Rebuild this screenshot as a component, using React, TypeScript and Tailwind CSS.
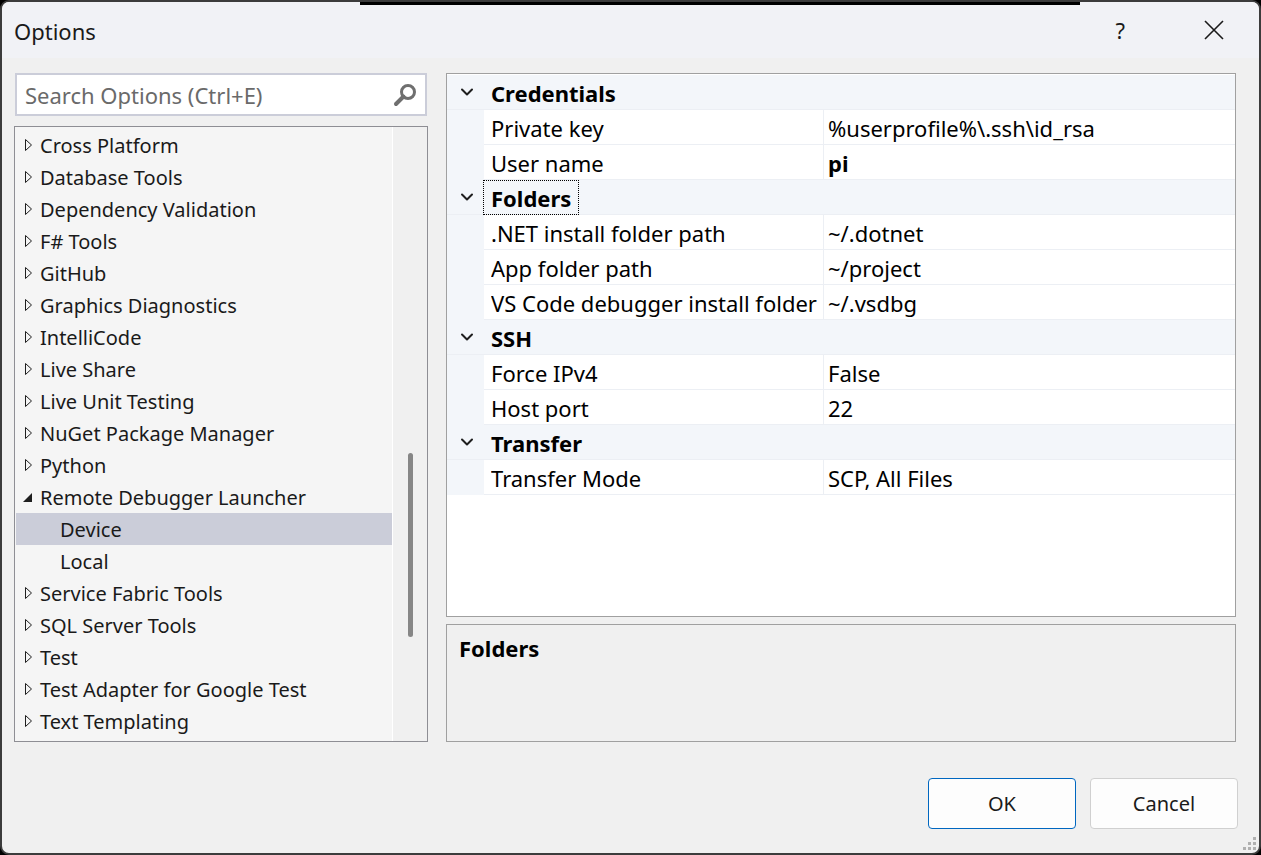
import React from 'react';

// Options dialog - Remote Debugger Launcher / Device page

const FONT = '"Noto Sans", "Open Sans", sans-serif';

type TreeItem = { label: string; level: 0 | 1; state?: 'closed' | 'open' | 'leaf'; selected?: boolean };

const treeItems: TreeItem[] = [
  { label: 'Cross Platform', level: 0, state: 'closed' },
  { label: 'Database Tools', level: 0, state: 'closed' },
  { label: 'Dependency Validation', level: 0, state: 'closed' },
  { label: 'F# Tools', level: 0, state: 'closed' },
  { label: 'GitHub', level: 0, state: 'closed' },
  { label: 'Graphics Diagnostics', level: 0, state: 'closed' },
  { label: 'IntelliCode', level: 0, state: 'closed' },
  { label: 'Live Share', level: 0, state: 'closed' },
  { label: 'Live Unit Testing', level: 0, state: 'closed' },
  { label: 'NuGet Package Manager', level: 0, state: 'closed' },
  { label: 'Python', level: 0, state: 'closed' },
  { label: 'Remote Debugger Launcher', level: 0, state: 'open' },
  { label: 'Device', level: 1, state: 'leaf', selected: true },
  { label: 'Local', level: 1, state: 'leaf' },
  { label: 'Service Fabric Tools', level: 0, state: 'closed' },
  { label: 'SQL Server Tools', level: 0, state: 'closed' },
  { label: 'Test', level: 0, state: 'closed' },
  { label: 'Test Adapter for Google Test', level: 0, state: 'closed' },
  { label: 'Text Templating', level: 0, state: 'closed' },
];

type Section = { title: string; focused?: boolean; props: { name: string; value: string; bold?: boolean }[] };

const sections: Section[] = [
  {
    title: 'Credentials',
    props: [
      { name: 'Private key', value: '%userprofile%\\.ssh\\id_rsa' },
      { name: 'User name', value: 'pi', bold: true },
    ],
  },
  {
    title: 'Folders',
    focused: true,
    props: [
      { name: '.NET install folder path', value: '~/.dotnet' },
      { name: 'App folder path', value: '~/project' },
      { name: 'VS Code debugger install folder path', value: '~/.vsdbg' },
    ],
  },
  {
    title: 'SSH',
    props: [
      { name: 'Force IPv4', value: 'False' },
      { name: 'Host port', value: '22' },
    ],
  },
  {
    title: 'Transfer',
    props: [{ name: 'Transfer Mode', value: 'SCP, All Files' }],
  },
];

function ClosedArrow() {
  return (
    <svg width="9" height="14" viewBox="0 0 9 14" className="shrink-0">
      <path d="M1.5 1.5 L7.5 7 L1.5 12.5 Z" fill="none" stroke="#1e1e1e" strokeWidth="1" strokeLinejoin="miter" />
    </svg>
  );
}

function OpenArrow() {
  return (
    <svg width="11" height="11" viewBox="0 0 11 11" className="shrink-0">
      <path d="M10 1 L10 10 L1 10 Z" fill="#1e1e1e" />
    </svg>
  );
}

function Chevron() {
  return (
    <svg width="14" height="10" viewBox="0 0 14 10">
      <path d="M2 2.5 L7 7.5 L12 2.5" fill="none" stroke="#1e1e1e" strokeWidth="2" strokeLinecap="round" strokeLinejoin="round" />
    </svg>
  );
}

export default function App() {
  return (
    <div className="w-[1261px] h-[855px] bg-black" style={{ fontFamily: FONT }}>
      <div className="relative w-full h-full rounded-[9px] border-2 border-[#3c3c3c] bg-[#f0f0f0] overflow-hidden flex flex-col text-[#1a1a1a]">
        {/* Title bar */}
        <div className="h-[56px] bg-[#f1f2f6] flex items-center pl-[12px] shrink-0">
          <span className="text-[22px] text-[#1a1a1a] pt-[2px]">Options</span>
          <div className="flex-1" />
          <span className="text-[22px] mr-[78px]">?</span>
          <svg width="22" height="22" viewBox="0 0 22 22" className="mr-[34px]">
            <path d="M2 2 L20 20 M20 2 L2 20" stroke="#1a1a1a" strokeWidth="1.6" />
          </svg>
        </div>

        {/* Body */}
        <div className="flex-1 flex flex-col pt-[15px] pl-[12px] pr-[23px]">
          <div className="flex gap-[18px]">
            {/* Left column */}
            <div className="w-[414px] flex flex-col">
              <div className="mx-px h-[43px] border-2 border-[#cbcdd9] bg-white flex items-center pl-[8px] pr-[7px]">
                <span className="flex-1 text-[22px] text-[#6a6a6a] pt-[2px]">Search Options (Ctrl+E)</span>
                <svg width="26" height="26" viewBox="0 0 26 26">
                  <circle cx="16" cy="10" r="6.5" fill="none" stroke="#6f6f6f" strokeWidth="3" />
                  <path d="M11.5 14.5 L4 22" stroke="#6f6f6f" strokeWidth="4" strokeLinecap="round" />
                </svg>
              </div>

              <div className="mt-[10px] h-[616px] border border-[#8e8e94] flex">
                <div className="w-[378px] bg-[#f5f5f5] border-r border-white pt-[2px] pl-px">
                  {treeItems.map((item) => (
                    <div
                      key={item.label}
                      className={`h-[32px] flex items-center text-[20px] ${item.selected ? 'bg-[#cbcdd9]' : ''}`}
                    >
                      {item.level === 0 ? (
                        <div className="w-[18px] ml-[6px] flex items-center">
                          {item.state === 'open' ? <OpenArrow /> : <div className="ml-[2px]"><ClosedArrow /></div>}
                        </div>
                      ) : (
                        <div className="w-[44px]" />
                      )}
                      <span className="pt-[2px]">{item.label}</span>
                    </div>
                  ))}
                </div>
                <div className="flex-1 bg-[#f0f0f0] flex justify-center pt-[326px] pl-[1px]">
                  <div className="w-[5px] h-[184px] rounded-full bg-[#868686]" />
                </div>
              </div>
            </div>

            {/* Right column */}
            <div className="flex-1 flex flex-col">
              <div className="h-[544px] border border-[#a0a0a0] bg-white pt-px">
                {sections.map((sec) => (
                  <div key={sec.title}>
                    <div className="h-[35px] bg-[#f3f6fa] border-b border-[#eceff4] flex items-center">
                      <div className="w-[37px] flex justify-center pl-[3px]">
                        <Chevron />
                      </div>
                      <span
                        className={`px-[7px] h-[35px] flex items-center pt-[3px] text-[22px] font-bold text-black ${
                          sec.focused ? 'border border-dotted border-black' : 'border border-transparent'
                        } -ml-px`}
                      >
                        {sec.title}
                      </span>
                    </div>
                    {sec.props.map((p) => (
                      <div key={p.name} className="h-[35px] flex bg-[#f3f6fa]">
                        <div className="w-[37px]" />
                        <div className="flex-1 flex bg-white border-b border-[#eceff4]">
                          <div className="w-[340px] pl-[7px] pt-[3px] flex items-center border-r border-[#eceff4] overflow-hidden whitespace-nowrap text-[22px] text-black">
                            <span className="block min-w-0 overflow-hidden">{p.name}</span>
                          </div>
                          <div className={`flex-1 pl-[4px] pt-[3px] flex items-center text-[22px] text-black ${p.bold ? 'font-bold' : ''}`}>
                            {p.value}
                          </div>
                        </div>
                      </div>
                    ))}
                  </div>
                ))}
              </div>

              <div className="mt-[7px] h-[118px] border border-[#a0a0a0] bg-[#f0f0f0] pl-[12px] pt-[7px]">
                <span className="text-[22px] font-bold text-black">Folders</span>
              </div>
            </div>
          </div>

          {/* Buttons */}
          <div className="mt-[36px] flex justify-end gap-[14px] -mr-[2px]">
            <button className="w-[148px] h-[51px] rounded-[4px] border border-[#0067c0] bg-[#fdfdfd] text-[20px] text-[#1a1a1a]">
              OK
            </button>
            <button className="w-[148px] h-[51px] rounded-[4px] border border-[#d0d0d0] bg-[#fdfdfd] text-[20px] text-[#1a1a1a]">
              Cancel
            </button>
          </div>
        </div>

        {/* Top edge shadow segment */}
        <div className="absolute top-0 left-[358px] w-[720px] h-[3px] bg-black" />

        {/* Resize grip */}
        <div className="absolute right-[3px] bottom-[3px] grid grid-cols-3 gap-[2px]">
          <span className="w-[3px] h-[3px]" />
          <span className="w-[3px] h-[3px]" />
          <span className="w-[3px] h-[3px] bg-[#b0b0b0]" />
          <span className="w-[3px] h-[3px]" />
          <span className="w-[3px] h-[3px] bg-[#b0b0b0]" />
          <span className="w-[3px] h-[3px] bg-[#b0b0b0]" />
          <span className="w-[3px] h-[3px] bg-[#b0b0b0]" />
          <span className="w-[3px] h-[3px] bg-[#b0b0b0]" />
          <span className="w-[3px] h-[3px] bg-[#b0b0b0]" />
        </div>
      </div>
    </div>
  );
}
